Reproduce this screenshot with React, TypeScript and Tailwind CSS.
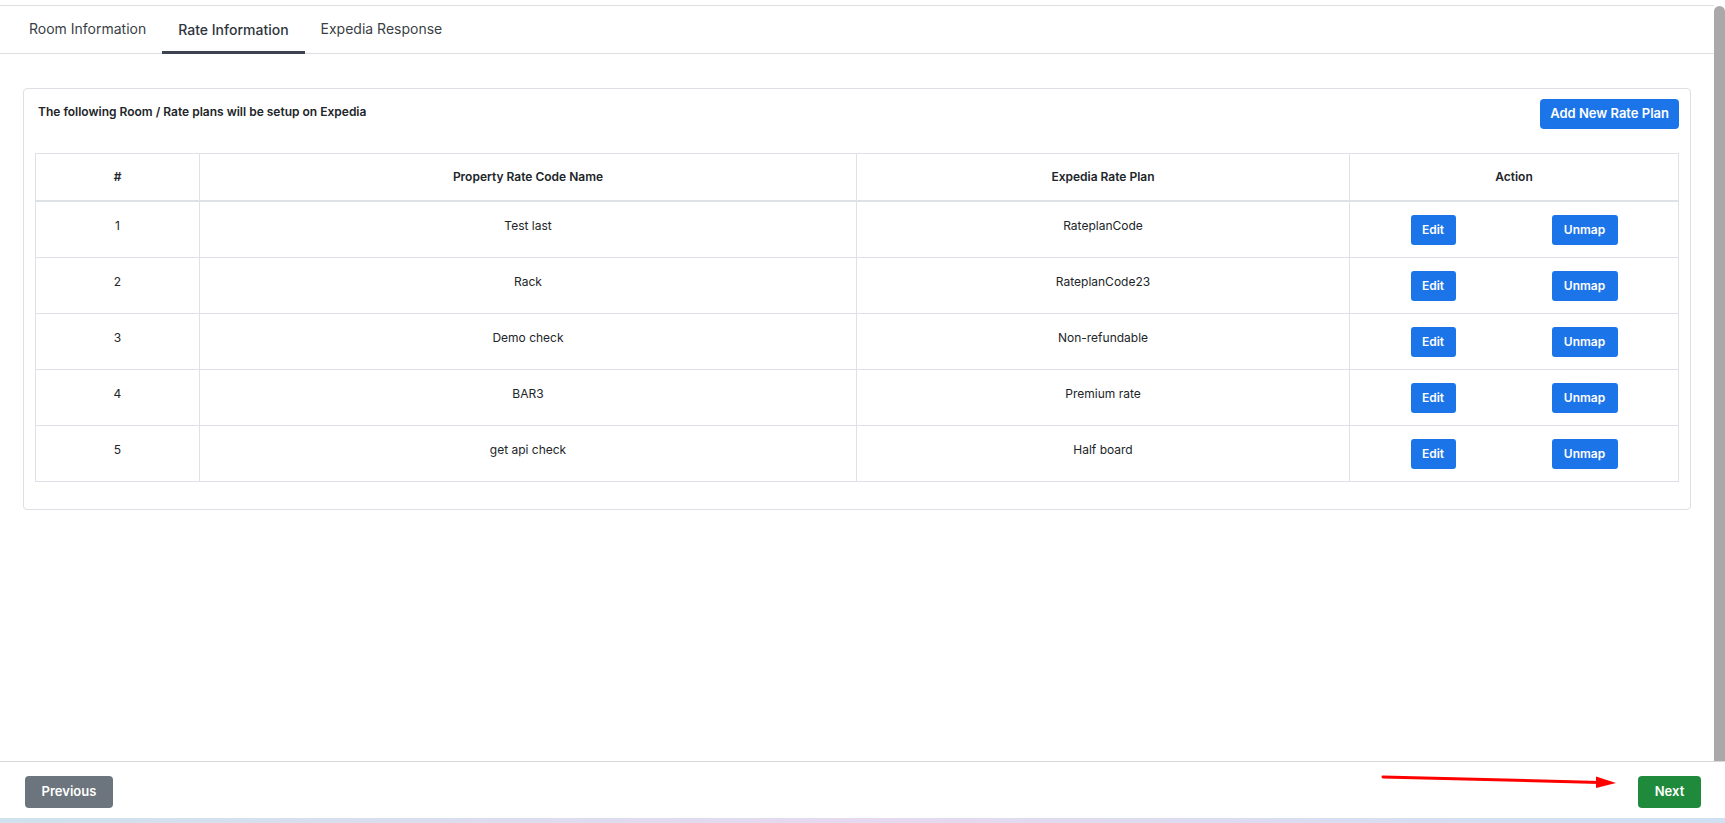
import React from 'react';

type RatePlan = { id: number; name: string; expedia: string };

const plans: RatePlan[] = [
  { id: 1, name: 'Test last', expedia: 'RateplanCode' },
  { id: 2, name: 'Rack', expedia: 'RateplanCode23' },
  { id: 3, name: 'Demo check', expedia: 'Non-refundable' },
  { id: 4, name: 'BAR3', expedia: 'Premium rate' },
  { id: 5, name: 'get api check', expedia: 'Half board' },
];

const tabs = ['Room Information', 'Rate Information', 'Expedia Response'];

export default function App() {
  return (
    <div
      className="relative flex h-[823px] w-full flex-col overflow-hidden bg-white text-[#212529]"
      style={{ fontFamily: 'Inter, "Liberation Sans", sans-serif' }}
    >
      <div className="flex min-h-0 flex-1">
        <div className="flex-1 pt-[5px]">
          {/* tabs */}
          <div className="flex h-[49px] border-y border-[#dcdfe2] pl-[13px]">
            {tabs.map((t) => (
              <div
                key={t}
                className={
                  t === 'Rate Information'
                    ? '-mb-px flex items-center border-b-[3px] border-[#3d4350] px-4 pt-[1px] text-[14px] font-medium text-[#2f353d]'
                    : 'flex items-center px-4 pb-[3px] text-[14px] text-[#3a3f45]'
                }
              >
                {t}
              </div>
            ))}
          </div>

          {/* card */}
          <div className="mx-[23px] mt-[34px] rounded-[4px] border border-[#dcdfe3] px-[11px] pb-[27px] pt-[10px]">
            <div className="flex items-start justify-between">
              <h2 className="pl-[3px] pt-[4px] text-[12px] font-semibold text-[#212529]">
                The following Room / Rate plans will be setup on Expedia
              </h2>
              <button className="h-[30px] rounded-[4px] bg-[#1c74e9] px-[10px] text-[13px] font-semibold text-white">
                Add New Rate Plan
              </button>
            </div>

            <table className="mt-[24px] w-full border-collapse text-[12px]">
              <thead>
                <tr className="h-[47px]">
                  <th className="w-[164px] border border-b-2 border-[#dee2e6] font-semibold">#</th>
                  <th className="w-[657px] border border-b-2 border-[#dee2e6] font-semibold">Property Rate Code Name</th>
                  <th className="w-[493px] border border-b-2 border-[#dee2e6] font-semibold">Expedia Rate Plan</th>
                  <th className="border border-b-2 border-[#dee2e6] font-semibold">Action</th>
                </tr>
              </thead>
              <tbody>
                {plans.map((p) => (
                  <tr key={p.id}>
                    <td className="border border-[#dee2e6] pt-[15px] text-center align-top">{p.id}</td>
                    <td className="border border-[#dee2e6] pt-[15px] text-center align-top">{p.name}</td>
                    <td className="border border-[#dee2e6] pt-[15px] text-center align-top">{p.expedia}</td>
                    <td className="border border-[#dee2e6] pb-[12px] pt-[13px]">
                      <div className="flex justify-center gap-[96px]">
                        <button className="h-[30px] w-[45px] rounded-[3px] bg-[#1c74e9] text-[12px] font-semibold text-white">
                          Edit
                        </button>
                        <button className="h-[30px] w-[66px] rounded-[3px] bg-[#1c74e9] text-[12px] font-semibold text-white">
                          Unmap
                        </button>
                      </div>
                    </td>
                  </tr>
                ))}
              </tbody>
            </table>
          </div>
        </div>

        {/* scrollbar */}
        <div className="w-[11px] pt-[6px]">
          <div className="h-full rounded-t-full bg-[#a9a9a9]" />
        </div>
      </div>

      {/* footer */}
      <div className="flex h-[57px] items-start justify-between border-t border-[#d6d6d6] pl-[25px] pr-[24px] pt-[14px]">
        <button className="h-[32px] w-[88px] rounded-[4px] bg-[#6c757d] text-[13px] font-semibold text-white">
          Previous
        </button>
        <button className="h-[32px] w-[63px] rounded-[4px] bg-[#1f8a3b] text-[13px] font-semibold text-white">
          Next
        </button>
      </div>
      <div className="h-[5px] bg-gradient-to-r from-[#cfe2ee] via-[#e6d9ef] to-[#cfe0f2]" />

      {/* red annotation arrow */}
      <svg
        className="pointer-events-none absolute left-[1380px] top-[772px]"
        width="240"
        height="20"
        viewBox="0 0 240 20"
      >
        <line x1="3" y1="5" x2="220" y2="10.5" stroke="#ff0000" strokeWidth="3" strokeLinecap="round" />
        <polygon points="216,4.5 236,11 216,16" fill="#ff0000" />
      </svg>
    </div>
  );
}
